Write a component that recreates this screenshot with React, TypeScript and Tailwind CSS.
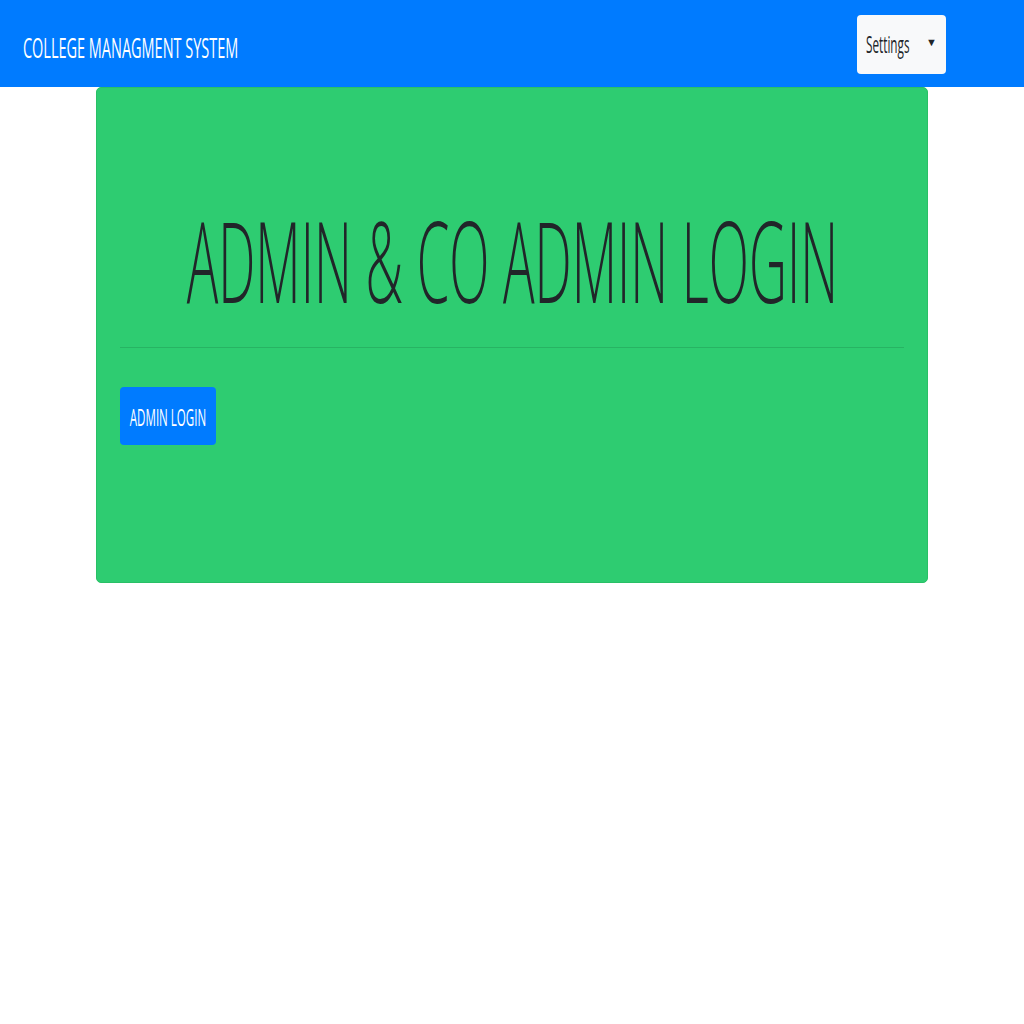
import React from "react";

const App: React.FC = () => {
  return (
    <div className="min-h-screen bg-white font-['Open_Sans',sans-serif]">
      {/* top navbar */}
      <nav className="flex h-[87px] items-center justify-between bg-[#007bff] pl-[23px] pr-[78px]">
        <span className="mt-[9px] inline-block origin-left whitespace-nowrap text-[27px] text-white [transform:scaleX(0.536)]">
          COLLEGE MANAGMENT SYSTEM
        </span>
        <button className="mt-[1px] flex h-[59px] w-[89px] items-center rounded-[4px] bg-[#f8f9fa] pl-[9px] pr-[9px] text-[#212529]">
          <span className="inline-block w-[43px] origin-left whitespace-nowrap text-left text-[23px] [transform:scaleX(0.51)]">
            Settings
          </span>
          <span className="mb-[4px] ml-auto text-[11px]">▼</span>
        </button>
      </nav>

      <div className="mx-auto w-[832px]">
        <div className="h-[496px] rounded-[5px] border border-[#29c066] bg-[#2ecc71] px-[23px]">
          <h1 className="flex h-[259px] items-end justify-center pb-[31px] font-light leading-none text-[#212529]">
            <span className="inline-block origin-center whitespace-nowrap text-[113px] [transform:scaleX(0.465)]">
              ADMIN &amp; CO ADMIN LOGIN
            </span>
          </h1>
          <hr className="border-t border-[#27b463]" />
          <button className="mt-[39px] flex h-[58px] w-[96px] items-center justify-center rounded-[4px] bg-[#007bff] pt-[3px] text-white">
            <span className="inline-block whitespace-nowrap text-[23px] [transform:scaleX(0.503)]">ADMIN LOGIN</span>
          </button>
        </div>
      </div>
    </div>
  );
};

export default App;
